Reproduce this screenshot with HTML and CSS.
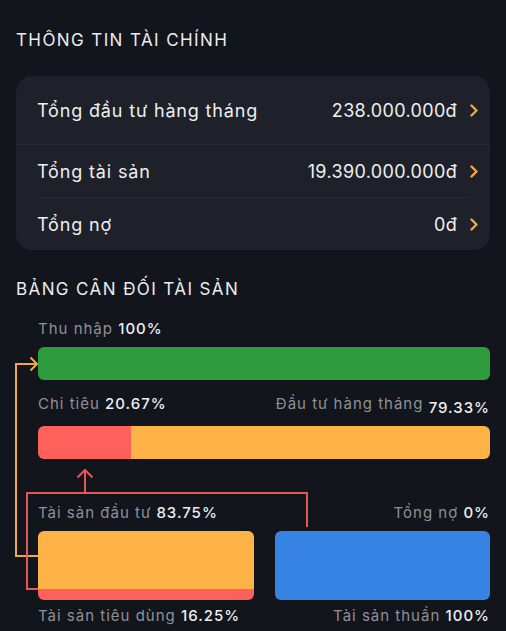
FILE: index.html
```html
<!DOCTYPE html>
<html lang="vi">
<head>
    <meta charset="UTF-8">
    <meta name="viewport" content="width=device-width, initial-scale=1.0">
    <title>Thông tin tài chính</title>
    <link rel="stylesheet" href="styles.css">
</head>
<body>

    <h2 class="section-title">THÔNG TIN TÀI CHÍNH</h2>

    <div class="info-card">
        <div class="info-row first">
            <span class="info-label">Tổng đầu tư hàng tháng</span>
            <span class="info-value">238.000.000đ</span>
            <svg class="chevron" viewBox="0 0 8 13"><path d="M1.5 1.5 L6.5 6.5 L1.5 11.5"/></svg>
        </div>
        <div class="info-row">
            <span class="info-label">Tổng tài sản</span>
            <span class="info-value">19.390.000.000đ</span>
            <svg class="chevron" viewBox="0 0 8 13"><path d="M1.5 1.5 L6.5 6.5 L1.5 11.5"/></svg>
        </div>
        <div class="divider"></div>
        <div class="info-row">
            <span class="info-label">Tổng nợ</span>
            <span class="info-value">0đ</span>
            <svg class="chevron" viewBox="0 0 8 13"><path d="M1.5 1.5 L6.5 6.5 L1.5 11.5"/></svg>
        </div>
    </div>

    <h2 class="section-title second">BẢNG CÂN ĐỐI TÀI SẢN</h2>

    <div class="balance">
        <div class="bar-label">
            <span>Thu nhập <b>100%</b></span>
        </div>
        <div class="bar green"></div>

        <div class="bar-label spaced">
            <span>Chi tiêu <b>20.67%</b></span>
            <span>Đầu tư hàng tháng <b class="low">79.33%</b></span>
        </div>
        <div class="bar split">
            <div class="part red" style="width: 20.67%"></div>
            <div class="part orange"></div>
        </div>

        <div class="boxes">
            <div class="box-col">
                <div class="bar-label">
                    <span>Tài sản đầu tư <b>83.75%</b></span>
                </div>
                <div class="box asset">
                    <div class="part orange" style="height: 83.75%"></div>
                    <div class="part red"></div>
                </div>
                <div class="bar-label">
                    <span>Tài sản tiêu dùng <b>16.25%</b></span>
                </div>
            </div>
            <div class="box-col right">
                <div class="bar-label">
                    <span>Tổng nợ <b>0%</b></span>
                </div>
                <div class="box blue"></div>
                <div class="bar-label">
                    <span>Tài sản thuần <b>100%</b></span>
                </div>
            </div>
        </div>

        <!-- connector lines drawn over the chart -->
        <svg class="links" width="506" height="300" viewBox="0 0 506 300">
            <path class="link-orange" d="M38 237 H16 V45 H37"/>
            <path class="link-orange" d="M30.5 38.5 L37 45 L30.5 51.5"/>
            <path class="link-red" d="M38 270 H27 V174 H307 V208"/>
            <path class="link-red" d="M85 174 V151"/>
            <path class="link-red" d="M77.5 158.5 L85 151 L92.5 158.5"/>
        </svg>
    </div>

</body>
</html>
```

FILE: styles.css
```css
body {
    font-family: Inter, "Noto Sans", sans-serif;
    background-color: #12151c;
    color: #eeeff1;
    margin: 0;
    padding: 28px 16px 0 16px;
}

.section-title {
    font-size: 17px;
    font-weight: 400;
    line-height: 24px;
    letter-spacing: 1.4px;
    margin: 0 0 24px 0;
    color: #ececee;
}

.section-title.second {
    margin-top: 27px;
    margin-bottom: 18px;
}

.info-card {
    background-color: #1e2129;
    border-radius: 16px;
}

.info-row {
    display: flex;
    align-items: center;
    height: 52px;
    padding: 0 12px 0 21px;
    font-size: 18px;
}

.info-row.first {
    height: 68px;
    border-bottom: 1px solid #2a2d35;
}

.divider {
    height: 1px;
    margin: 0 21px;
    background-color: #2a2d35;
}

.info-label {
    flex: 1;
    letter-spacing: 0.85px;
}

.info-value {
    margin-right: 13px;
    letter-spacing: 0.35px;
}

.chevron {
    width: 8px;
    height: 13px;
    fill: none;
    stroke: #f5a83e;
    stroke-width: 2.4;
    stroke-linecap: round;
    stroke-linejoin: round;
}

.balance {
    position: relative;
    padding-left: 22px;
}

.bar-label {
    display: flex;
    justify-content: space-between;
    font-size: 15px;
    line-height: 20px;
    letter-spacing: 1px;
    color: #8f9197;
    margin-bottom: 8px;
}

.bar-label b {
    font-weight: 500;
    color: #eeeff1;
}

.bar-label b.low {
    vertical-align: -4px;
}

.bar-label.spaced {
    margin-top: 14px;
}

.bar {
    height: 33px;
    border-radius: 6px;
    overflow: hidden;
}

.bar.green {
    background-color: #2e9b3c;
}

.bar.split {
    display: flex;
}

.part.red {
    background-color: #fe605b;
}

.part.orange {
    background-color: #ffb246;
}

.bar.split .part.orange {
    flex: 1;
}

.boxes {
    display: grid;
    grid-template-columns: 1fr 1fr;
    column-gap: 21px;
    margin-top: 44px;
}

.box-col .bar-label {
    margin-bottom: 8px;
}

.box-col .box + .bar-label {
    margin-top: 6px;
    margin-bottom: 0;
}

.box-col.right .bar-label {
    justify-content: flex-end;
}

.box {
    height: 69px;
    border-radius: 6px;
    overflow: hidden;
}

.box.asset {
    display: flex;
    flex-direction: column;
}

.box.asset .part.red {
    flex: 1;
}

.box.blue {
    background-color: #3683e3;
}

.links {
    position: absolute;
    top: 0;
    left: -16px;
    fill: none;
    stroke-width: 2;
    stroke-linejoin: miter;
}

.link-orange {
    stroke: #f3a846;
}

.link-red {
    stroke: #e4565a;
}
```
